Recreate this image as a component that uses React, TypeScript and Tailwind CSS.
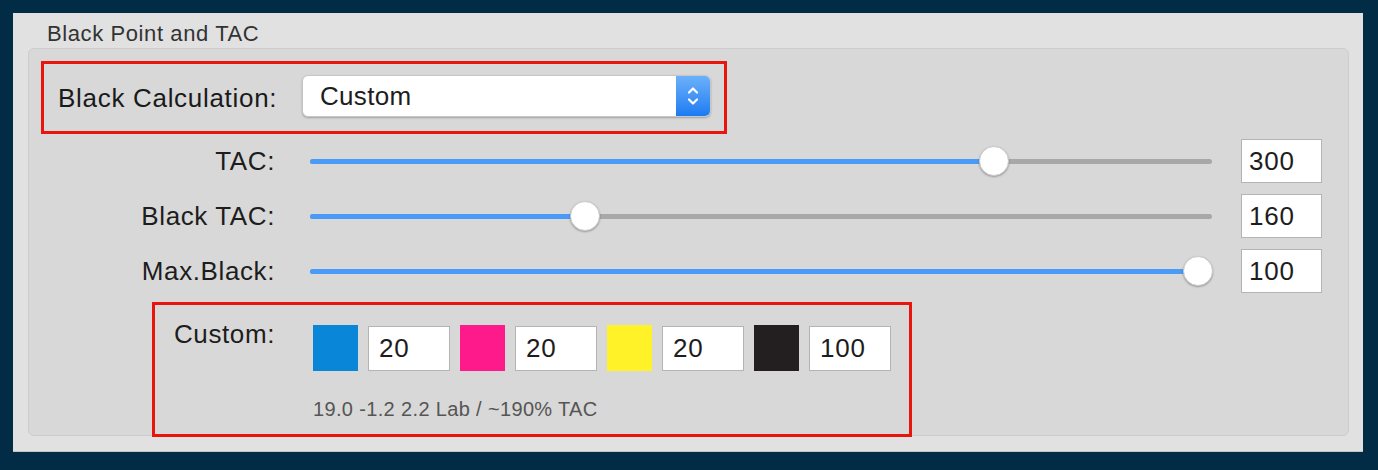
import { ReactNode } from "react";

const sliders = [
  { label: "TAC:", value: "300", thumb: 684 },
  { label: "Black TAC:", value: "160", thumb: 275 },
  { label: "Max.Black:", value: "100", thumb: 888 },
];

const inks = [
  { color: "bg-[#0a86d8]", value: "20" },
  { color: "bg-[#fe1a8a]", value: "20" },
  { color: "bg-[#fff228]", value: "20" },
  { color: "bg-[#231f20]", value: "100" },
];

function RedBox({ className, children }: { className: string; children: ReactNode }) {
  return <div className={`border-[3px] border-[#e8150e] ${className}`}>{children}</div>;
}

function Slider({ thumb }: { thumb: number }) {
  return (
    <div className="relative flex h-[44px] w-[902px] items-center">
      <div className="relative h-[5px] w-full rounded-full bg-[#a8a8a8]">
        <div className="absolute left-0 top-0 h-full rounded-full bg-[#4a9bf7]" style={{ width: thumb }} />
      </div>
      <div
        className="absolute top-[7px] h-[30px] w-[30px] rounded-full border border-[#c9c9c9] bg-white shadow-[0_1px_2px_rgba(0,0,0,0.3)]"
        style={{ left: thumb - 15 }}
      />
    </div>
  );
}

export default function App() {
  return (
    <div className="h-[470px] w-full bg-[#022b46] pl-[13px] pt-[13px] font-['Liberation_Sans',Arial,sans-serif] text-[#1d1d1d]">
      <div className="h-[439px] w-[1350px] border-b border-[#c4c4c4] bg-[#e1e1e1] pt-[10px]">
        <div className="ml-[34px] text-[22px] leading-none tracking-[0.6px] text-[#333]">
          Black Point and TAC
        </div>

        <div className="ml-[15px] mt-[3px] h-[388px] w-[1321px] rounded-[6px] border border-[#cdcdcd] bg-[#d8d8d8]">
          <RedBox className="ml-[12px] mt-[12px] flex h-[73px] w-[686px] items-start pl-[14px]">
            <div className="mt-[21px] w-[244px] text-[26px] leading-none tracking-[0.7px] text-[#1a1a1a]">Black Calculation:</div>
            <div className="mt-[11px] flex h-[42px] w-[409px] items-stretch rounded-[6px] border border-[#c6c6c6] bg-white shadow-[0_1px_2px_rgba(0,0,0,0.25)]">
              <div className="flex flex-1 items-center pl-[17px] text-[26px] leading-none tracking-[0.3px]">Custom</div>
              <div className="flex w-[34px] items-center justify-center rounded-r-[5px] bg-gradient-to-b from-[#6bb0fa] to-[#1a7bf2]">
                <svg width="14" height="26" viewBox="0 0 14 26" fill="none" stroke="white" strokeWidth="2.2" strokeLinecap="round" strokeLinejoin="round">
                  <path d="M3 9.5 L7 5.5 L11 9.5" />
                  <path d="M3 16.5 L7 20.5 L11 16.5" />
                </svg>
              </div>
            </div>
          </RedBox>

          <div className="mt-[5px] flex flex-col gap-[11px]">
            {sliders.map((s) => (
              <div key={s.label} className="flex h-[44px] items-center">
                <div className="w-[246px] text-right text-[26px] leading-none tracking-[0.6px]">{s.label}</div>
                <div className="ml-[35px]">
                  <Slider thumb={s.thumb} />
                </div>
                <div className="ml-[29px] flex h-[44px] w-[81px] items-center border border-[#b4b4b4] bg-white pl-[7px] text-[26px] leading-none tracking-[0.8px]">
                  {s.value}
                </div>
              </div>
            ))}
          </div>

          <RedBox className="ml-[123px] mt-[9px] flex h-[135px] w-[760px] items-start">
            <div className="mt-[16px] w-[120px] text-right text-[26px] leading-none tracking-[0.6px]">Custom:</div>
            <div className="ml-[38px] mt-[20px] flex flex-col">
              <div className="flex items-center gap-[10px]">
                {inks.map((ink, i) => (
                  <div key={i} className="flex items-center gap-[10px]">
                    <div className={`h-[46px] w-[45px] ${ink.color}`} />
                    <div className="flex h-[45px] w-[82px] items-center border border-[#b4b4b4] bg-white pl-[10px] text-[26px] leading-none tracking-[0.8px]">
                      {ink.value}
                    </div>
                  </div>
                ))}
              </div>
              <div className="mt-[28px] text-[20px] leading-none tracking-[0.35px] text-[#555]">
                19.0 -1.2 2.2 Lab / ~190% TAC
              </div>
            </div>
          </RedBox>
        </div>
      </div>
    </div>
  );
}
